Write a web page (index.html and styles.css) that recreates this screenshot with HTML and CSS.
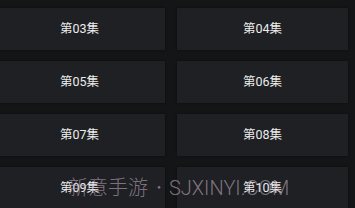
FILE: index.html
```html
<!DOCTYPE html>
<html lang="zh">
<head>
<meta charset="UTF-8">
<meta name="viewport" content="width=device-width, initial-scale=1.0">
<title>选集</title>
<link rel="stylesheet" href="styles.css">
</head>
<body>
<div class="episodes">
    <div class="episode">第03集</div>
    <div class="episode">第04集</div>
    <div class="episode">第05集</div>
    <div class="episode">第06集</div>
    <div class="episode">第07集</div>
    <div class="episode">第08集</div>
    <div class="episode">第09集</div>
    <div class="episode">第10集</div>
</div>
<div class="watermark">新意手游<span class="dot">•</span><span class="site">SJXINYI.COM</span></div>
</body>
</html>
```

FILE: styles.css
```css
body, html {
    margin: 0;
    height: 100%;
    overflow: hidden;
    background-color: #141517;
    font-family: Roboto, "Noto Sans CJK SC", sans-serif;
}

.episodes {
    display: grid;
    grid-template-columns: 171px 171px;
    grid-auto-rows: 42px;
    column-gap: 12px;
    row-gap: 11px;
    margin-left: -6px;
    padding-top: 8px;
}

.episode {
    display: flex;
    align-items: center;
    justify-content: center;
    padding-bottom: 3px;
    box-sizing: border-box;
    background-color: #1f2023;
    box-shadow: 0 0 2px rgba(0, 0, 0, 0.5);
    color: #ececec;
    font-size: 12.5px;
}

.watermark {
    position: absolute;
    left: 68px;
    top: 172px;
    color: rgba(190, 170, 192, 0.62);
    font-family: "Noto Sans CJK SC", sans-serif;
    font-size: 20px;
    font-weight: 300;
    white-space: nowrap;
}

.watermark .dot {
    margin: 0 3px 0 4px;
    font-size: 14px;
    vertical-align: 3px;
}

.watermark .site {
    font-family: Roboto, sans-serif;
    font-weight: 300;
}
```
